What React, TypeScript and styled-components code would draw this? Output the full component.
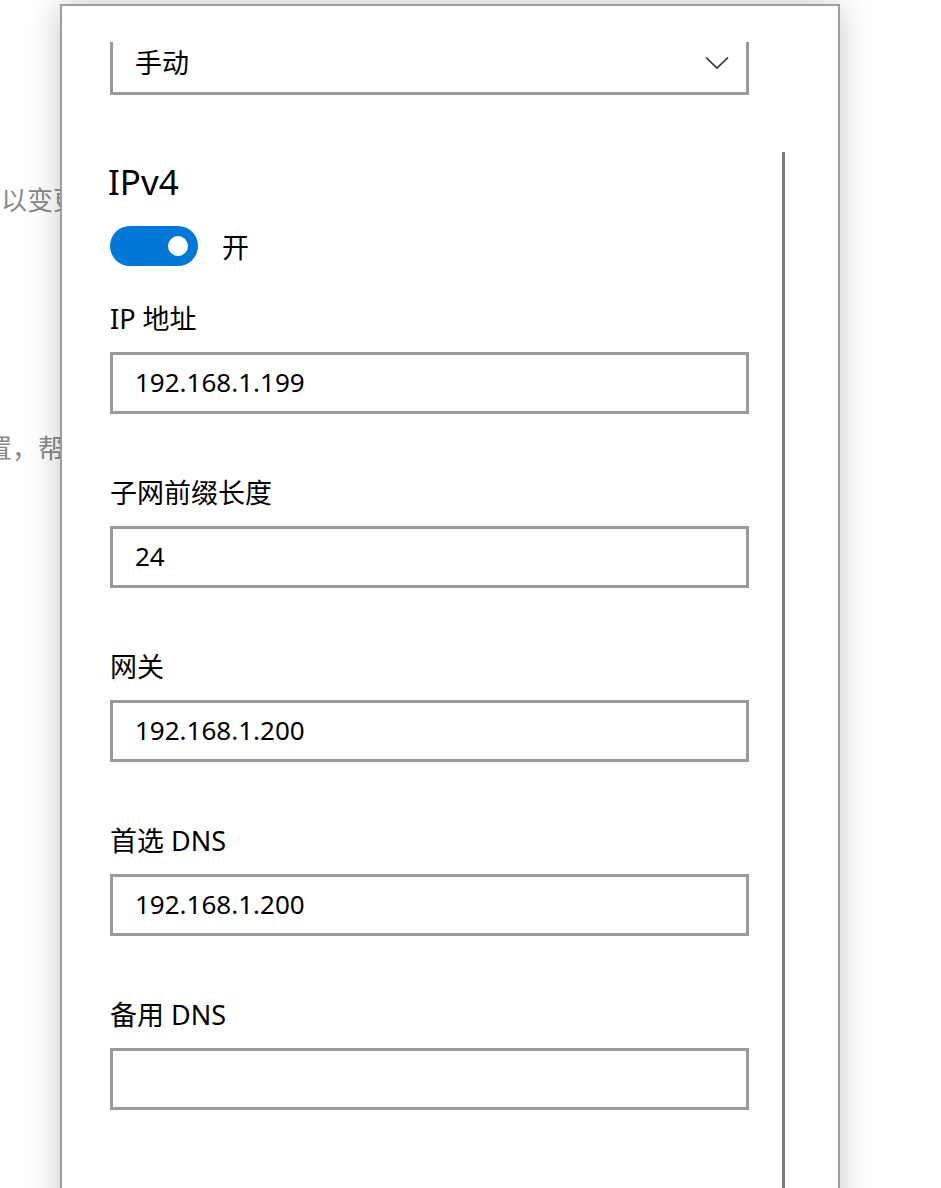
import React from "react";
import styled, { createGlobalStyle } from "styled-components";

const GlobalStyle = createGlobalStyle`
  html, body {
    margin: 0;
    padding: 0;
    background: #fff;
    overflow: hidden;
  }
  body {
    font-family: "Noto Sans", "Noto Sans CJK SC", sans-serif;
    color: #000;
  }
`;

const Desktop = styled.div`
  position: relative;
  width: 941px;
  height: 1188px;
  overflow: hidden;
`;

// strip of the page that still shows beside the dialog
const Backdrop = styled.div`
  width: 60px;
  overflow: hidden;
  display: flex;
  flex-direction: column;
  gap: 216px;
  padding-top: 183px;
`;

const BackLine = styled.div<{ $shift: number }>`
  margin-left: ${(p) => p.$shift}px;
  font-family: "Noto Sans CJK SC", sans-serif;
  font-size: 26px;
  line-height: 32px;
  color: #8a8a8a;
  white-space: nowrap;
`;

const Dialog = styled.div`
  position: absolute;
  left: 60px;
  top: 4px;
  width: 780px;
  bottom: -40px;
  box-sizing: border-box;
  background: #fff;
  border: 2px solid #9d9d9d;
  box-shadow: 0 0 30px rgba(0, 0, 0, 0.22);
  display: flex;
  flex-direction: column;
  padding-top: 36px;
`;

const ScrollArea = styled.div`
  position: relative;
  flex: 1;
  overflow: hidden;
`;

const ScrollThumb = styled.div`
  position: absolute;
  left: 720px;
  top: 110px;
  bottom: 0;
  width: 3px;
  background: #7b7b7b;
`;

const Content = styled.div`
  margin-top: -9px;
  padding-left: 48px;
  width: 639px;
  display: flex;
  flex-direction: column;
`;

const Box = styled.div`
  box-sizing: border-box;
  height: 62px;
  border: 3px solid #9a9a9a;
  background: #fff;
  display: flex;
  align-items: center;
  padding: 0 17px 3px 22px;
  font-size: 26px;
  line-height: 36px;
  color: #000;
`;

const Select = styled(Box)`
  justify-content: space-between;
  font-size: 27px;
`;

const Heading = styled.h2`
  margin: 63px 0 0 -2px;
  font-size: 35px;
  line-height: 48px;
  font-weight: 400;
`;

const ToggleRow = styled.div`
  margin-top: 20px;
  display: flex;
  align-items: center;
  gap: 24px;
  font-size: 27px;
`;

const Switch = styled.div<{ $on: boolean }>`
  box-sizing: border-box;
  width: 88px;
  height: 40px;
  border-radius: 20px;
  background: ${(p) => (p.$on ? "#0078d7" : "#fff")};
  display: flex;
  align-items: center;
  justify-content: ${(p) => (p.$on ? "flex-end" : "flex-start")};
  padding: 0 10px;
`;

const Knob = styled.div`
  width: 20px;
  height: 20px;
  border-radius: 50%;
  background: #fff;
`;

const Fields = styled.div`
  margin-top: 33px;
  display: flex;
  flex-direction: column;
  gap: 59px;
`;

const Field = styled.div`
  display: flex;
  flex-direction: column;
  gap: 15px;
`;

const Label = styled.div`
  padding-top: 2px;
  font-size: 27px;
  line-height: 36px;
`;

const Chevron = () => (
  <svg width="24" height="14" viewBox="0 0 24 14">
    <path d="M1 1.5 L12 12 L23 1.5" fill="none" stroke="#333" strokeWidth="1.7" />
  </svg>
);

const fields = [
  { label: "IP 地址", value: "192.168.1.199" },
  { label: "子网前缀长度", value: "24" },
  { label: "网关", value: "192.168.1.200" },
  { label: "首选 DNS", value: "192.168.1.200" },
  { label: "备用 DNS", value: "" },
];

export default function App() {
  return (
    <>
      <GlobalStyle />
      <Desktop>
        <Backdrop>
          <BackLine $shift={-25}>可以变更</BackLine>
          <BackLine $shift={-14}>置，帮助</BackLine>
        </Backdrop>
        <Dialog>
          <ScrollArea>
            <ScrollThumb />
            <Content>
              <Select>
                <span>手动</span>
                <Chevron />
              </Select>
              <Heading>IPv4</Heading>
              <ToggleRow>
                <Switch $on>
                  <Knob />
                </Switch>
                <span>开</span>
              </ToggleRow>
              <Fields>
                {fields.map((f) => (
                  <Field key={f.label}>
                    <Label>{f.label}</Label>
                    <Box>{f.value}</Box>
                  </Field>
                ))}
              </Fields>
            </Content>
          </ScrollArea>
        </Dialog>
      </Desktop>
    </>
  );
}
